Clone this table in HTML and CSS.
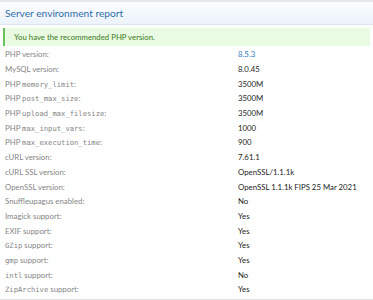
FILE: index.html
```html
<!DOCTYPE html>
<html lang="en">
<head>
    <meta charset="UTF-8" />
    <meta name="viewport" content="width=device-width, initial-scale=1.0"/>
    <title>Server environment report</title>
    <link rel="stylesheet" href="styles.css">
</head>
<body>
<div class="block">
    <h2 class="block-header">Server environment report</h2>

    <div class="block-body">
        <div class="message-success">You have the recommended PHP version.</div>

        <dl class="pairs">
            <dt>PHP version:</dt><dd class="link">8.5.3</dd>
            <dt>MySQL version:</dt><dd>8.0.45</dd>
            <dt>PHP <code>memory_limit</code>:</dt><dd>3500M</dd>
            <dt>PHP <code>post_max_size</code>:</dt><dd>3500M</dd>
            <dt>PHP <code>upload_max_filesize</code>:</dt><dd>3500M</dd>
            <dt>PHP <code>max_input_vars</code>:</dt><dd>1000</dd>
            <dt>PHP <code>max_execution_time</code>:</dt><dd>900</dd>
            <dt>cURL version:</dt><dd>7.61.1</dd>
            <dt>cURL SSL version:</dt><dd>OpenSSL/1.1.1k</dd>
            <dt>OpenSSL version:</dt><dd>OpenSSL 1.1.1k FIPS 25 Mar 2021</dd>
            <dt>Snuffleupagus enabled:</dt><dd>No</dd>
            <dt>Imagick support:</dt><dd>Yes</dd>
            <dt>EXIF support:</dt><dd>Yes</dd>
            <dt><code>GZip</code> support:</dt><dd>Yes</dd>
            <dt><code>gmp</code> support:</dt><dd>Yes</dd>
            <dt><code>intl</code> support:</dt><dd>No</dd>
            <dt><code>ZipArchive</code> support:</dt><dd>Yes</dd>
        </dl>
    </div>

    <div class="block-footer"></div>
</div>
</body>
</html>
```

FILE: styles.css
```css
* {
    box-sizing: border-box;
    margin: 0;
    padding: 0;
}

body {
    font-family: 'Lato', 'Open Sans', sans-serif;
    font-size: 7.8px;
    background-color: #e8e8e8;
    padding-top: 2px;
}

.block {
    background-color: white;
    min-height: 300px;
}

.block-header {
    height: 23px;
    padding: 0 5px;
    font-size: 10.2px;
    font-weight: 400;
    line-height: 22px;
    color: #2f6fa8;
    background: linear-gradient(to bottom, #fbfcfe, #ecf3fb);
    border-bottom: 1px solid #dde6f0;
}

.block-body {
    padding: 3px 3px 0;
}

.message-success {
    height: 18px;
    padding-left: 9px;
    line-height: 18px;
    color: #3c7a21;
    background-color: #e9fbe3;
    border-left: 2px solid #69c15a;
}

.pairs {
    display: grid;
    grid-template-columns: 233px 1fr;
    grid-auto-rows: 14.7px;
    align-items: center;
    padding: 1px 2px 0;
}

.pairs dt {
    color: #858585;
}

.pairs dd {
    color: #1d1d1d;
    white-space: nowrap;
}

.pairs dd.link {
    color: #2f7bbd;
}

code {
    font-family: 'DejaVu Sans Mono', 'Liberation Mono', monospace;
    font-size: 7.2px;
}

.block-footer {
    height: 6px;
    margin-top: 2px;
    background-color: #ebebeb;
    border-top: 1px solid #e0e0e0;
}
```
